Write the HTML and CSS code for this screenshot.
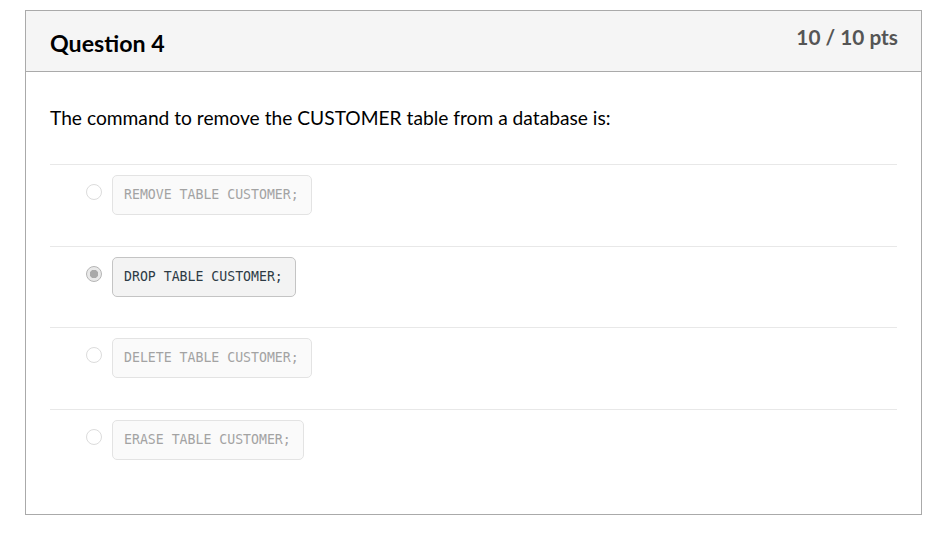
FILE: index.html
```html
<!DOCTYPE html>
<html>
<head>
<meta charset="utf-8">
<link rel="stylesheet" href="styles.css">
</head>
<body>
<div class="card">
  <div class="card-header">
    <h2 class="title">Question 4</h2>
    <div class="pts">10 / 10 pts</div>
  </div>
  <div class="card-body">
    <p class="question">The command to remove the CUSTOMER table from a database is:</p>
    <div class="answers">
      <div class="answer">
        <span class="radio"></span>
        <code class="code">REMOVE TABLE CUSTOMER;</code>
      </div>
      <div class="answer selected">
        <span class="radio"></span>
        <code class="code">DROP TABLE CUSTOMER;</code>
      </div>
      <div class="answer">
        <span class="radio"></span>
        <code class="code">DELETE TABLE CUSTOMER;</code>
      </div>
      <div class="answer">
        <span class="radio"></span>
        <code class="code">ERASE TABLE CUSTOMER;</code>
      </div>
    </div>
  </div>
</div>
</body>
</html>
```
FILE: styles.css
```css
* { box-sizing: border-box; }
body {
  margin: 0;
  padding: 10px 20px 0 25px;
  background: #fff;
  font-family: Lato, "Liberation Sans", sans-serif;
  color: #000;
}
.card {
  width: 897px;
  height: 505px;
  border: 1px solid #aaaaaa;
}
.card-header {
  height: 61px;
  background: #f5f5f5;
  border-bottom: 1px solid #aaaaaa;
  display: flex;
  justify-content: space-between;
  align-items: flex-start;
  padding: 0 23px 0 24px;
}
.title {
  margin: 0;
  padding-top: 18px;
  font-size: 23.2px;
  font-weight: 700;
  line-height: 28px;
  color: #000;
}
.pts {
  padding-top: 13px;
  font-size: 20.8px;
  font-weight: 700;
  line-height: 26px;
  color: #555555;
}
.card-body {
  padding: 34px 24px 0 24px;
}
.question {
  margin: 0;
  font-size: 19.2px;
  line-height: 24px;
}
.answers {
  margin-top: 34px;
}
.answer {
  border-top: 1px solid #e8e8e8;
  height: 81.67px;
  display: flex;
  align-items: flex-start;
  padding-top: 10px;
}
.radio {
  width: 16px;
  height: 16px;
  border-radius: 50%;
  border: 1px solid #dcdcdc;
  background: #fff;
  margin: 9px 10px 0 36px;
  flex: none;
}
.code {
  font-family: "DejaVu Sans Mono", "Liberation Mono", monospace;
  font-size: 13.2px;
  line-height: 16px;
  padding: 11px 12px 11px 11px;
  border: 1px solid #e3e3e3;
  border-radius: 5px;
  background: #fafafa;
  color: #a3a3a3;
  letter-spacing: 0;
}
.selected .code {
  background: #f3f3f3;
  border-color: #c4c4c4;
  color: #2d3b45;
}
.selected .radio {
  border: 1px solid #b5b5b5;
  background: radial-gradient(circle, #a9a9a9 0 4px, #e9e9e9 4.5px);
}
```
